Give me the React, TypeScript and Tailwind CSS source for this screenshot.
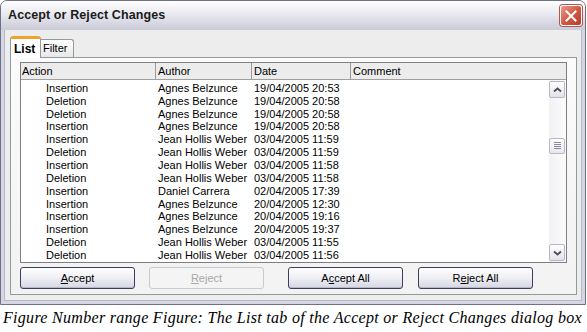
import React from "react";

const rows: [string, string, string][] = [
  ["Insertion", "Agnes Belzunce", "19/04/2005 20:53"],
  ["Deletion", "Agnes Belzunce", "19/04/2005 20:58"],
  ["Deletion", "Agnes Belzunce", "19/04/2005 20:58"],
  ["Insertion", "Agnes Belzunce", "19/04/2005 20:58"],
  ["Insertion", "Jean Hollis Weber", "03/04/2005 11:59"],
  ["Deletion", "Jean Hollis Weber", "03/04/2005 11:59"],
  ["Insertion", "Jean Hollis Weber", "03/04/2005 11:58"],
  ["Deletion", "Jean Hollis Weber", "03/04/2005 11:58"],
  ["Insertion", "Daniel Carrera", "02/04/2005 17:39"],
  ["Insertion", "Agnes Belzunce", "20/04/2005 12:30"],
  ["Insertion", "Agnes Belzunce", "20/04/2005 19:16"],
  ["Insertion", "Agnes Belzunce", "20/04/2005 19:37"],
  ["Deletion", "Jean Hollis Weber", "03/04/2005 11:55"],
  ["Deletion", "Jean Hollis Weber", "03/04/2005 11:56"],
];

function Btn({ children, disabled }: { children: React.ReactNode; disabled?: boolean }) {
  return (
    <div
      className={
        disabled
          ? "w-[115px] h-[22px] rounded-[3px] border border-[#c9c9d2] bg-[#f4f4f4] text-[#a8a8a8] flex items-center justify-center"
          : "w-[115px] h-[22px] rounded-[3px] border border-[#3d3d5c] bg-gradient-to-b from-[#ffffff] via-[#eeeef4] to-[#d6d6e2] text-black flex items-center justify-center shadow-[inset_0_-1px_0_#b8b8cc]"
      }
    >
      {children}
    </div>
  );
}

function ScrollBtn({ down }: { down?: boolean }) {
  return (
    <div className="w-[16px] h-[17px] rounded-[2px] border border-[#b6b6c8] bg-gradient-to-b from-[#ffffff] to-[#e2e2ea] flex items-center justify-center">
      <svg width="9" height="6" viewBox="0 0 9 6">
        {down ? (
          <path d="M1 1.5 L4.5 4.5 L8 1.5" fill="none" stroke="#4d4d5c" strokeWidth="1.8" />
        ) : (
          <path d="M1 4.5 L4.5 1.5 L8 4.5" fill="none" stroke="#4d4d5c" strokeWidth="1.8" />
        )}
      </svg>
    </div>
  );
}

export default function App() {
  return (
    <div className="w-[587px] h-[332px] bg-white font-['Liberation_Sans',sans-serif] text-[11px] text-black leading-none">
      {/* window */}
      <div className="w-[586px] h-[305px] rounded-t-[7px] border border-[#6f6f88] bg-[#d6d6e2] flex flex-col overflow-hidden">
        {/* title bar */}
        <div className="h-[29px] shrink-0 bg-gradient-to-b from-[#ffffff] via-[#e6e6ee] to-[#cbcbd8] flex items-center justify-between pl-[7px] pr-[3px]">
          <span className="font-bold text-[12.5px] text-[#1a1a1a] tracking-[0.1px]">Accept or Reject Changes</span>
          <div className="w-[22px] h-[21px] rounded-[3px] border border-white bg-gradient-to-br from-[#ec9a8c] via-[#d35a45] to-[#b83a28] flex items-center justify-center shadow-[0_0_0_1px_#a85a50]">
            <svg width="12" height="12" viewBox="0 0 12 12">
              <path d="M1.5 1.5 L10.5 10.5 M10.5 1.5 L1.5 10.5" stroke="white" strokeWidth="2" strokeLinecap="square" />
            </svg>
          </div>
        </div>
        {/* body */}
        <div className="flex-1 mx-[3px] mb-[3px] bg-[#ededed] border-x border-b border-[#b8b8c8] flex flex-col pt-[5px] pl-[5px] pr-[4px]">
          {/* tabs */}
          <div className="flex items-end h-[22px]">
            <div className="w-[31px] h-[22px] bg-white border-t-[3px] border-t-[#f0a32c] border-x border-x-[#919b9c] rounded-t-[3px] font-bold text-[12px] flex items-center pl-[3px] relative top-[1px] z-10">
              List
            </div>
            <div className="w-[33px] h-[18px] bg-gradient-to-b from-[#ffffff] to-[#e8e8ea] border-t border-r border-[#919b9c] rounded-tr-[3px] flex items-center pl-[2px] text-[11px]">
              Filter
            </div>
          </div>
          {/* panel */}
          <div className="h-[238px] border border-[#919b9c] bg-gradient-to-b from-[#fbfbfb] to-[#f2f2f2] pt-[4px] pl-[9px] pr-[6px] flex flex-col">
            {/* list */}
            <div className="w-[547px] h-[201px] border border-[#7f7f7f] bg-white flex flex-col">
              <div className="h-[17px] shrink-0 flex bg-[#ececec] border-b border-[#a0a0a0]">
                <div className="w-[135px] border-r border-[#9a9a9a] flex items-center pl-[1px]">Action</div>
                <div className="w-[96px] border-r border-[#9a9a9a] flex items-center pl-[2px]">Author</div>
                <div className="w-[99px] border-r border-[#9a9a9a] flex items-center pl-[2px]">Date</div>
                <div className="flex-1 flex items-center pl-[2px]">Comment</div>
              </div>
              <div className="flex-1 flex min-h-0">
                <div className="flex-1 overflow-hidden pt-[2px]">
                  {rows.map((r, i) => (
                    <div key={i} className="h-[12.85px] flex items-center">
                      <div className="w-[135px] pl-[25px]">{r[0]}</div>
                      <div className="w-[96px] pl-[2px]">{r[1]}</div>
                      <div className="w-[99px] pl-[2px]">{r[2]}</div>
                      <div className="flex-1"></div>
                    </div>
                  ))}
                </div>
                <div className="w-[17px] bg-gradient-to-r from-[#f2f2f4] to-[#fbfbfc] flex flex-col justify-between py-[1px] pr-[1px]">
                  <ScrollBtn />
                  <div className="w-[16px] h-[16px] mb-[51px] rounded-[2px] border border-[#b6b6c8] bg-gradient-to-b from-[#ffffff] to-[#e6e6ee] flex flex-col items-center justify-center gap-[1px]">
                    <div className="w-[7px] h-[1px] bg-[#8a8a9c]" />
                    <div className="w-[7px] h-[1px] bg-[#8a8a9c]" />
                    <div className="w-[7px] h-[1px] bg-[#8a8a9c]" />
                    <div className="w-[7px] h-[1px] bg-[#8a8a9c]" />
                  </div>
                  <ScrollBtn down />
                </div>
              </div>
            </div>
            {/* buttons */}
            <div className="flex mt-[4px]">
              <Btn>
                <span><span className="underline">A</span>ccept</span>
              </Btn>
              <div className="w-[14px]" />
              <Btn disabled>
                <span><span className="underline">R</span>eject</span>
              </Btn>
              <div className="w-[24px]" />
              <Btn>
                <span>A<span className="underline">c</span>cept All</span>
              </Btn>
              <div className="w-[15px]" />
              <Btn>
                <span>R<span className="underline">e</span>ject All</span>
              </Btn>
            </div>
          </div>
        </div>
      </div>
      <div className="pl-[3px] pt-[5px] font-['Liberation_Serif',serif] italic text-[16px] tracking-[0.3px] whitespace-nowrap">
        Figure Number range Figure: The List tab of the Accept or Reject Changes dialog box
      </div>
    </div>
  );
}
